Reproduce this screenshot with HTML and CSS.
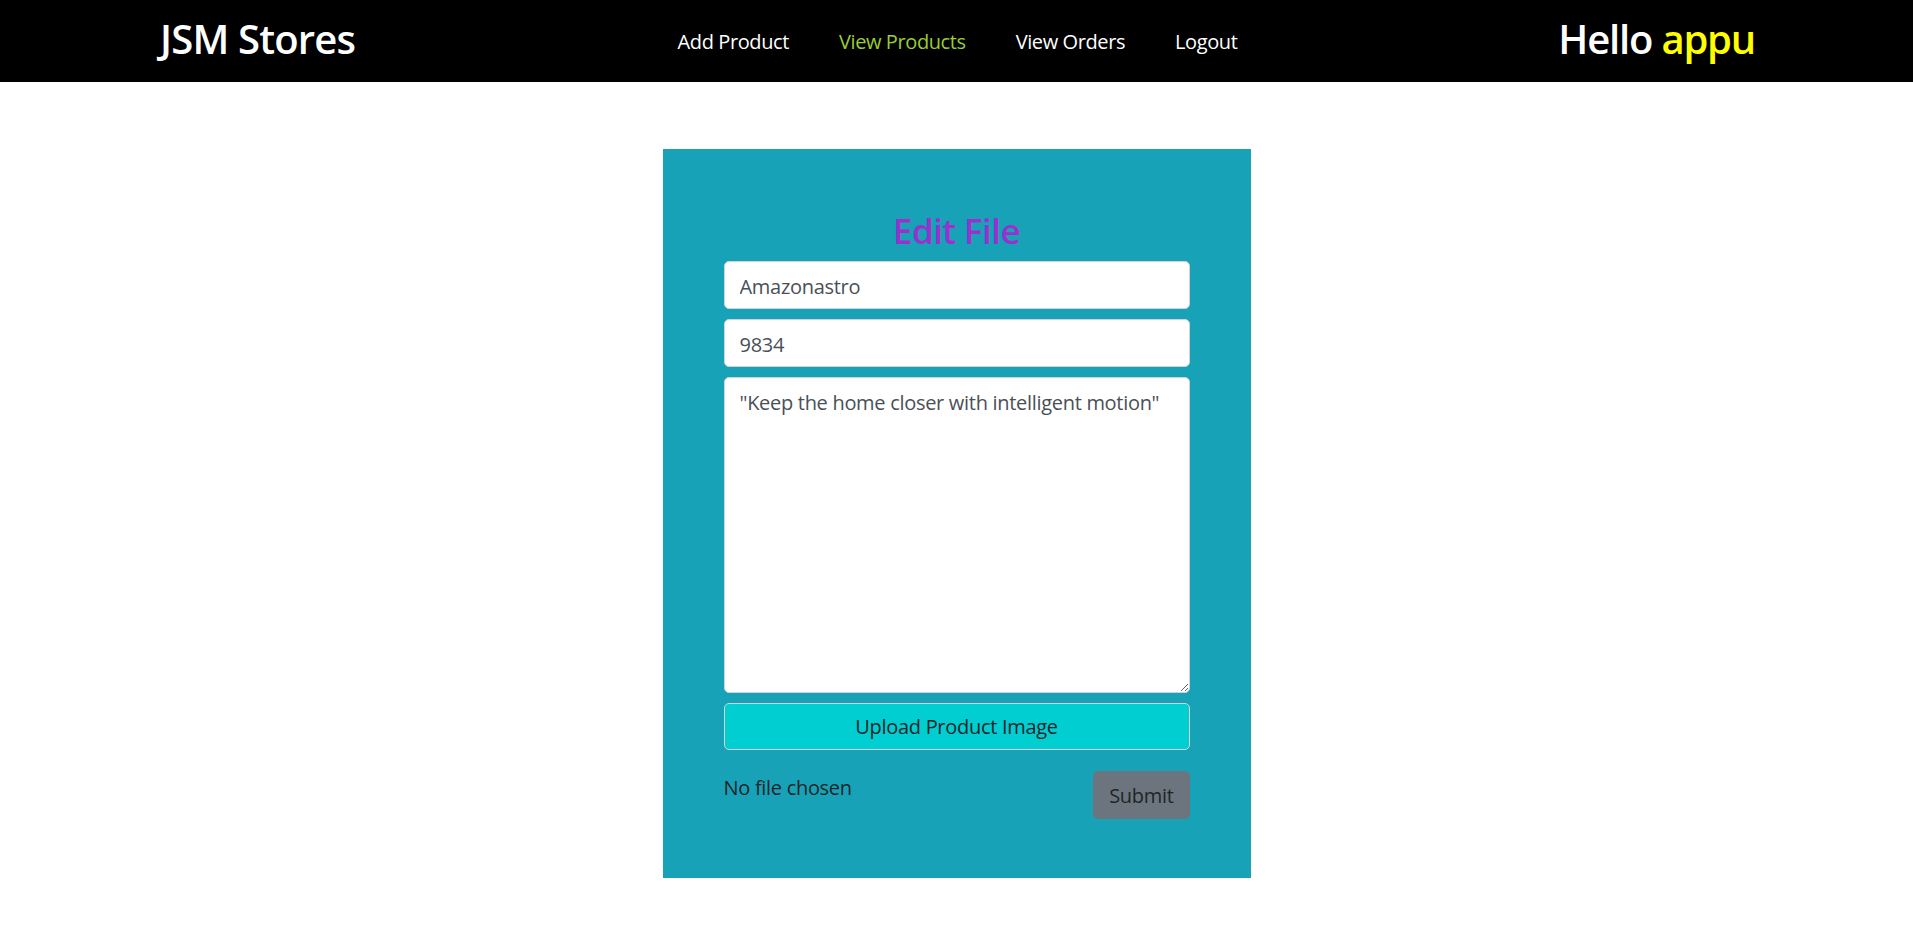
FILE: index.html
```
<!DOCTYPE html>
<html lang="en">
<head>
<meta charset="utf-8">
<title>JSM Stores - Edit File</title>
<link rel="stylesheet" href="styles.css">
</head>
<body>
<nav class="topbar">
  <div class="brand">JSM Stores</div>
  <ul class="menu">
    <li><a class="menu-link" href="#">Add Product</a></li>
    <li><a class="menu-link active" href="#">View Products</a></li>
    <li><a class="menu-link" href="#">View Orders</a></li>
    <li><a class="menu-link" href="#">Logout</a></li>
  </ul>
  <div class="greeting">Hello <span class="user">appu</span></div>
</nav>
<main class="page">
  <form class="edit-card">
    <h3 class="edit-title">Edit File</h3>
    <input class="field" type="text" value="Amazonastro">
    <input class="field" type="text" value="9834">
    <textarea class="field field-area">"Keep the home closer with intelligent motion"</textarea>
    <label class="upload-btn">Upload Product Image</label>
    <div class="form-foot">
      <span class="file-status">No file chosen</span>
      <button class="submit-btn" type="button">Submit</button>
    </div>
  </form>
</main>
</body>
</html>
```
FILE: styles.css
```
* { box-sizing: border-box; }

body {
  margin: 0;
  background: #fff;
  font-family: "Open Sans", "Noto Sans", "DejaVu Sans", sans-serif;
  color: #212529;
}

.topbar {
  height: 82px;
  background: #000;
  display: grid;
  grid-template-columns: 1fr auto 1fr;
  align-items: center;
  padding: 0 158px 0 160px;
}

.brand {
  justify-self: start;
  font-size: 40px;
  line-height: 48px;
  font-weight: 600;
  color: #fff;
  letter-spacing: -0.8px;
  margin-bottom: 4px;
}

.menu {
  list-style: none;
  margin: 2px 0 0;
  padding: 0;
  display: flex;
  gap: 50px;
}

.menu-link {
  display: block;
  font-size: 20px;
  line-height: 30px;
  color: #fff;
  text-decoration: none;
  letter-spacing: -0.4px;
}

.menu-link.active { color: #9acd32; }

.greeting {
  justify-self: end;
  font-size: 40px;
  line-height: 48px;
  font-weight: 600;
  color: #fff;
  letter-spacing: -1.2px;
  margin-bottom: 4px;
}

.user { color: #ffff00; }

.page {
  padding-top: 67px;
}

.edit-card {
  width: 588px;
  margin: 0 auto;
  background: #17a2b8;
  padding: 61px 61px 59px;
  display: flex;
  flex-direction: column;
}

.edit-title {
  margin: 0 0 9px;
  font-size: 35px;
  line-height: 42px;
  font-weight: 600;
  text-align: center;
  color: #9932cc;
  letter-spacing: -0.6px;
}

.field {
  display: block;
  width: 100%;
  height: 48px;
  margin: 0 0 10px;
  padding: 9px 15px 7px;
  font-family: inherit;
  font-size: 20px;
  line-height: 30px;
  color: #495057;
  background: #fff;
  border: 1px solid #ced4da;
  border-radius: 5px;
  outline: none;
  letter-spacing: -0.3px;
}

.field-area {
  height: 316px;
  padding-top: 10px;
  resize: vertical;
}

.upload-btn {
  display: block;
  height: 47px;
  border: 1px solid #ced4da;
  border-radius: 5px;
  background: #00ced1;
  color: #212529;
  font-size: 20px;
  line-height: 46px;
  text-align: center;
  letter-spacing: -0.3px;
}

.form-foot {
  margin-top: 21px;
  display: flex;
  justify-content: space-between;
  align-items: flex-start;
}

.file-status {
  margin-top: 2px;
  font-size: 20px;
  line-height: 30px;
  color: #212529;
  letter-spacing: -0.3px;
}

.submit-btn {
  height: 48px;
  padding: 9px 15px 7px;
  font-family: inherit;
  font-size: 20px;
  line-height: 30px;
  color: #212529;
  background: #6c757d;
  border: 1px solid #6c757d;
  border-radius: 5px;
  letter-spacing: -0.3px;
}
```
